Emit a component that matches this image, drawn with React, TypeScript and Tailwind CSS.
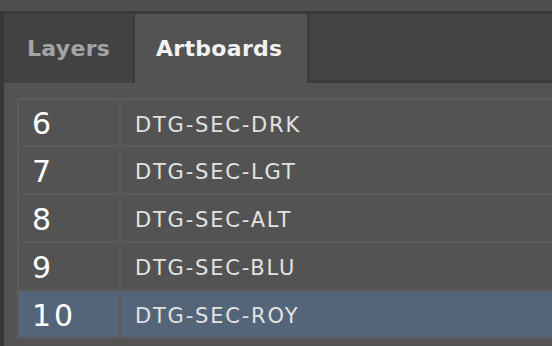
const rows = [
    { n: '6', name: 'DTG-SEC-DRK' },
    { n: '7', name: 'DTG-SEC-LGT' },
    { n: '8', name: 'DTG-SEC-ALT' },
    { n: '9', name: 'DTG-SEC-BLU' },
    { n: '10', name: 'DTG-SEC-ROY', selected: true },
];

export default function App() {
    return (
        <div className="w-[552px] h-[346px] overflow-hidden bg-[#535353] flex flex-col" style={{ fontFamily: '"DejaVu Sans", "Open Sans", sans-serif' }}>
            <div className="h-[11px] bg-[#4f4f4f] shrink-0" />
            <div className="h-[3px] bg-[#393939] shrink-0" />
            <div className="flex flex-1">
                <div className="w-[4px] bg-[#383838] shrink-0" />
                <div className="flex-1 flex flex-col">
                    {/* tabs */}
                    <div className="h-[69px] flex shrink-0">
                        <div className="w-[131px] bg-[#424242] border-r-2 border-[#3a3a3a] flex items-center pl-[23px]">
                            <span className="text-[22px] font-bold text-[#a3a3a3] tracking-[0.3px]">Layers</span>
                        </div>
                        <div className="w-[172px] bg-[#535353] flex items-center pl-[21px]">
                            <span className="text-[22px] font-bold text-[#f2f2f2] tracking-[0.3px]">Artboards</span>
                        </div>
                        <div className="flex-1 bg-[#434343] border-l-[3px] border-b-[3px] border-[#3b3b3b]" />
                    </div>
                    {/* table */}
                    <div className="flex-1 pl-[13px] pt-[15px]">
                        <div className="border-t-2 border-l-2 border-[#5c5c5c] bg-[#535353]">
                            {rows.map((r, i) => (
                                <div
                                    key={r.n}
                                    className={
                                        'flex border-b-2 border-[#5a5a5a] ' +
                                        (i === 0 ? 'h-[47px] ' : 'h-[48px] ') +
                                        (r.selected ? 'bg-[#546479]' : 'bg-[#535353]')
                                    }
                                >
                                    <div className="w-[102px] shrink-0 border-r-2 border-[#5a5a5a] flex items-center pl-[13px] pt-[3px]">
                                        <span className="text-[30px] text-white leading-none tracking-[3px]">{r.n}</span>
                                    </div>
                                    <div className="flex-1 flex items-center pl-[14px] pt-[5px]">
                                        <span className="text-[21px] text-[#e2e2e2] leading-none tracking-[1.8px]">{r.name}</span>
                                    </div>
                                </div>
                            ))}
                        </div>
                    </div>
                </div>
            </div>
        </div>
    );
}
